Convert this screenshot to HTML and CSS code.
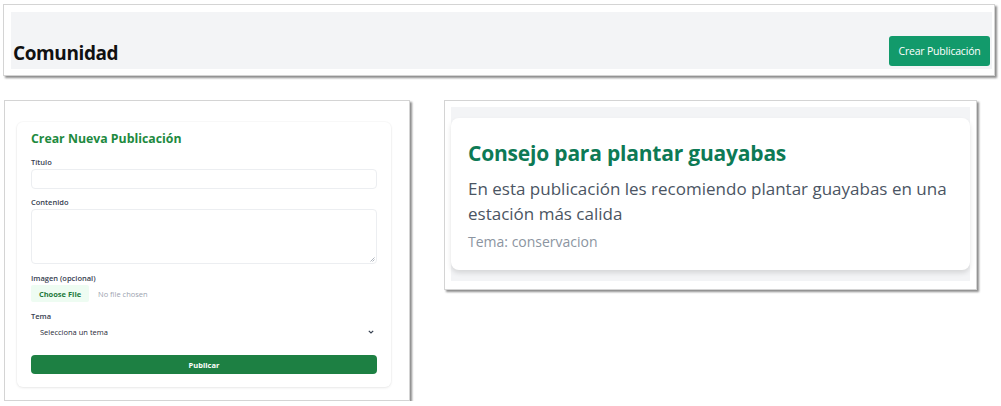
FILE: index.html
```html
<!DOCTYPE html>
<html lang="es">
<head>
<meta charset="utf-8">
<title>Comunidad</title>
<link rel="stylesheet" href="styles.css">
</head>
<body>
<div class="page">
  <div class="frame frame-top">
    <div class="bar">
      <h1 class="bar-title">Comunidad</h1>
      <button class="btn-create">Crear Publicación</button>
    </div>
  </div>

  <div class="row">
    <div class="frame frame-form">
      <form class="form-card">
        <h2 class="form-title">Crear Nueva Publicación</h2>
        <label class="lbl">Título</label>
        <div class="input"></div>
        <label class="lbl">Contenido</label>
        <div class="textarea">
          <svg class="grip" width="5" height="5" viewBox="0 0 5 5"><path d="M4.5 0.5 L0.5 4.5 M4.5 2.5 L2.5 4.5" stroke="#9ca3af" stroke-width="0.8"/></svg>
        </div>
        <label class="lbl">Imagen (opcional)</label>
        <div class="file-row">
          <span class="file-btn">Choose File</span>
          <span class="file-none">No file chosen</span>
        </div>
        <label class="lbl">Tema</label>
        <div class="select">
          <span>Selecciona un tema</span>
          <svg width="6" height="4" viewBox="0 0 6 4"><path d="M0.8 0.8 L3 3 L5.2 0.8" fill="none" stroke="#374151" stroke-width="1.2"/></svg>
        </div>
        <div class="btn-publish">Publicar</div>
      </form>
    </div>

    <div class="frame frame-post">
      <div class="post-wrap">
        <article class="post">
          <h3 class="post-title">Consejo para plantar guayabas</h3>
          <p class="post-body">En esta publicación les recomiendo plantar guayabas en una estación más calida</p>
          <p class="post-topic">Tema: conservacion</p>
        </article>
      </div>
    </div>
  </div>
</div>
</body>
</html>
```

FILE: styles.css
```css
* { box-sizing: border-box; margin: 0; padding: 0; }
html, body { background: #ffffff; }
body { font-family: "Open Sans", "Noto Sans", sans-serif; color: #111827; }

.page { padding: 4px 0 0 3px; }

.frame {
  background: #ffffff;
  border: 1px solid #d4d4d4;
  box-shadow: 2px 2px 2px rgba(0,0,0,0.45);
}

/* top */
.frame-top {
  width: 992px;
  height: 72px;
  padding: 7px 2px 6px 7px;
}
.bar {
  height: 57px;
  background: #f3f4f6;
  display: flex;
  align-items: flex-end;
  justify-content: space-between;
  padding: 0 2px 3px 2px;
}
.bar-title {
  font-size: 19px;
  font-weight: 700;
  color: #111111;
  letter-spacing: -0.4px;
  line-height: 1;
  margin-bottom: 3px;
}
.btn-create {
  font-family: inherit;
  width: 101px;
  height: 30px;
  border: none;
  border-radius: 3px;
  background: #129a6b;
  color: #ffffff;
  font-size: 10.5px;
  letter-spacing: -0.2px;
}

/* row */
.row {
  display: flex;
  align-items: flex-start;
  gap: 34px;
  margin-top: 24px;
  margin-left: 1px;
}

/* form */
.frame-form {
  width: 406px;
  height: 301px;
  padding: 21px 18px 13px 12px;
}
.form-card {
  height: 265px;
  background: #ffffff;
  border-radius: 6px;
  box-shadow: 0 1px 3px rgba(0,0,0,0.08), 0 0 0 1px rgba(0,0,0,0.02);
  padding: 8px 14px 0 14px;
  display: flex;
  flex-direction: column;
}
.form-title {
  font-size: 12.3px;
  font-weight: 700;
  color: #1e8a40;
  line-height: 18px;
  margin-bottom: 9px;
}
.lbl {
  font-size: 7.5px;
  font-weight: 600;
  color: #374151;
  line-height: 10px;
  margin-bottom: 2px;
}
.input {
  height: 20px;
  border: 1px solid #eceef1;
  border-radius: 4px;
  margin-bottom: 8px;
}
.textarea {
  position: relative;
  height: 55px;
  border: 1px solid #eceef1;
  border-radius: 4px;
  margin-bottom: 9px;
}
.grip { position: absolute; right: 1px; bottom: 1px; }
.file-row {
  display: flex;
  align-items: center;
  gap: 9px;
  margin-bottom: 9px;
}
.file-btn {
  width: 58px;
  height: 17px;
  background: #eefcf2;
  color: #1f7a3d;
  font-size: 7.5px;
  font-weight: 700;
  display: flex;
  align-items: center;
  justify-content: center;
  border-radius: 2px;
}
.file-none { font-size: 7.5px; color: #9ca3af; }
.select {
  height: 18px;
  display: flex;
  align-items: center;
  justify-content: space-between;
  padding: 0 3px 0 9px;
  font-size: 7.5px;
  color: #1f2937;
  margin-bottom: 14px;
}
.btn-publish {
  height: 19px;
  background: #1d8043;
  color: #ffffff;
  border-radius: 4px;
  font-size: 7.5px;
  font-weight: 700;
  display: flex;
  align-items: center;
  justify-content: center;
}

/* post */
.frame-post {
  width: 533px;
  height: 190px;
  padding: 6px 6px 8px 6px;
}
.post-wrap {
  height: 174px;
  background: #f3f4f6;
  padding-top: 11px;
}
.post {
  height: 152px;
  background: #ffffff;
  border-radius: 8px;
  box-shadow: 0 3px 5px rgba(0,0,0,0.12);
  padding: 21px 17px 0 17px;
}
.post-title {
  font-size: 21px;
  font-weight: 700;
  color: #0d7a55;
  line-height: 28px;
  letter-spacing: -0.2px;
  margin-bottom: 9px;
}
.post-body {
  font-size: 17px;
  line-height: 25px;
  color: #4b5563;
}
.post-topic {
  margin-top: 6px;
  font-size: 14px;
  line-height: 20px;
  color: #8c95a1;
}
```
